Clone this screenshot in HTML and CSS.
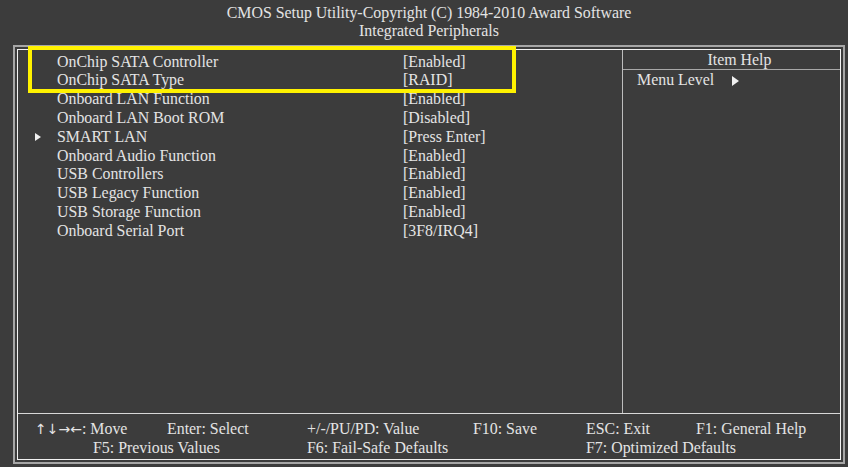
FILE: index.html
```html
<!DOCTYPE html>
<html lang="en">
<head>
    <meta charset="UTF-8">
    <title>Integrated Peripherals</title>
    <link rel="stylesheet" href="styles.css">
</head>
<body>
    <div class="screen">
        <div class="title">
            <div>CMOS Setup Utility-Copyright (C) 1984-2010 Award Software</div>
            <div>Integrated Peripherals</div>
        </div>

        <div class="frame">
            <div class="inner">
                <div class="main">
                    <!-- setup items -->
                    <div class="items">
                        <div class="row"><span></span><span>OnChip SATA Controller</span><span>[Enabled]</span></div>
                        <div class="row"><span></span><span>OnChip SATA Type</span><span>[RAID]</span></div>
                        <div class="row"><span></span><span>Onboard LAN Function</span><span>[Enabled]</span></div>
                        <div class="row"><span></span><span>Onboard LAN Boot ROM</span><span>[Disabled]</span></div>
                        <div class="row"><span class="tri"></span><span>SMART LAN</span><span>[Press Enter]</span></div>
                        <div class="row"><span></span><span>Onboard Audio Function</span><span>[Enabled]</span></div>
                        <div class="row"><span></span><span>USB Controllers</span><span>[Enabled]</span></div>
                        <div class="row"><span></span><span>USB Legacy Function</span><span>[Enabled]</span></div>
                        <div class="row"><span></span><span>USB Storage Function</span><span>[Enabled]</span></div>
                        <div class="row"><span></span><span>Onboard Serial Port</span><span>[3F8/IRQ4]</span></div>
                    </div>

                    <!-- help panel -->
                    <div class="help">
                        <div class="help-title">Item Help</div>
                        <div class="help-line">Menu Level <span class="tri"></span></div>
                    </div>
                </div>

                <div class="keys">
                    <span class="k1"><span class="arrows">↑↓→←</span>: Move</span>
                    <span class="k2">Enter: Select</span>
                    <span class="k3">+/-/PU/PD: Value</span>
                    <span class="k4">F10: Save</span>
                    <span class="k5">ESC: Exit</span>
                    <span class="k6">F1: General Help</span>
                    <span class="k7">F5: Previous Values</span>
                    <span class="k3">F6: Fail-Safe Defaults</span>
                    <span class="k8">F7: Optimized Defaults</span>
                </div>
            </div>
        </div>

        <div class="highlight"></div>
    </div>
</body>
</html>
```

FILE: styles.css
```css
body {
    margin: 0;
    background: #3c3c3c;
    color: #e4e4e4;
    font-family: "Liberation Serif", "Times New Roman", serif;
    font-size: 15.9px;
}

.screen {
    position: relative;
    width: 848px;
    height: 467px;
    overflow: hidden;
}

.title {
    margin: 0 3px 0 13px;
    height: 45px;
    padding-top: 4px;
    box-sizing: border-box;
    text-align: center;
    line-height: 18px;
    font-size: 15.9px;
}

.frame {
    margin: 0 3px 0 13px;
    height: 419px;
    box-sizing: border-box;
    border: 2px solid #a6a6a6;
    padding: 2px;
}

.inner {
    height: 100%;
    box-sizing: border-box;
    border: 1px solid #f2f2f2;
    display: flex;
    flex-direction: column;
}

.main {
    height: 364px;
    box-sizing: border-box;
    border-bottom: 1px solid #d8d8d8;
    display: grid;
    grid-template-columns: 604px 1fr;
}

.items {
    padding: 2.6px 0 0 17px;
}

.row {
    display: grid;
    grid-template-columns: 22px 346px 1fr;
    align-items: center;
    height: 18.8px;
    line-height: 18.8px;
    white-space: nowrap;
}

.tri {
    display: inline-block;
    width: 0;
    height: 0;
    border-left: 6px solid #f0f0f0;
    border-top: 4.5px solid transparent;
    border-bottom: 4.5px solid transparent;
}

.help {
    border-left: 1px solid #bdbdbd;
}

.help-title {
    height: 19px;
    line-height: 20px;
    padding-left: 16px;
    text-align: center;
    border-bottom: 1px solid #a8a8a8;
}

.help-line {
    padding-left: 14px;
    line-height: 19px;
}

.help-line .tri {
    margin-left: 14px;
    border-left-width: 7px;
    border-top-width: 5px;
    border-bottom-width: 5px;
    vertical-align: -1px;
}

.keys {
    flex: 1;
    padding: 4.5px 0 0 17px;
    display: grid;
    grid-template-columns: 132px 140px 166px 113px 110px 1fr;
    grid-auto-rows: 19px;
    line-height: 19px;
    white-space: nowrap;
}

.arrows {
    font-family: "DejaVu Sans", sans-serif;
    font-size: 14px;
}

.k1 { grid-column: 1; }
.k2 { grid-column: 2; }
.k3 { grid-column: 3; }
.k4 { grid-column: 4; }
.k5 { grid-column: 5; }
.k6 { grid-column: 6; }
.k7 { grid-column: 1 / span 2; padding-left: 58px; }
.k8 { grid-column: 5 / span 2; }

.highlight {
    position: absolute;
    left: 28px;
    top: 46px;
    width: 488px;
    height: 47px;
    box-sizing: border-box;
    border: 4.5px solid #fff200;
}
```
